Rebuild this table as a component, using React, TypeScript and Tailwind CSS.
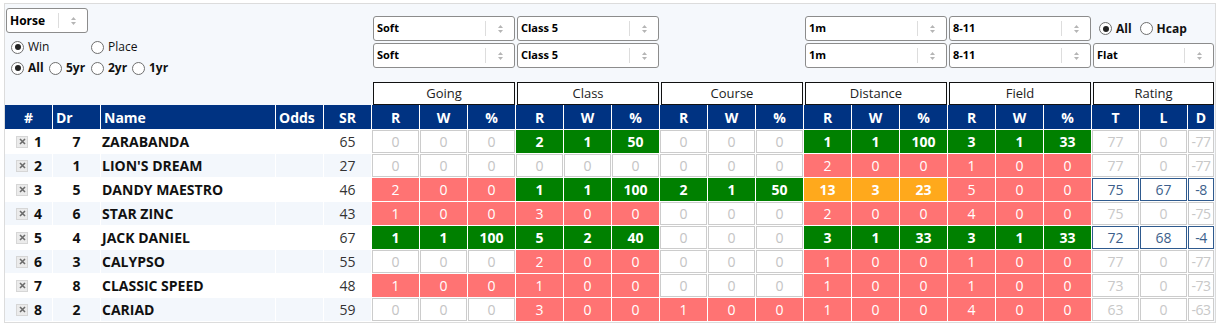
import type { ReactNode } from "react";

type Tone = "w" | "g" | "r" | "o";
type Stat = [number, number, number, Tone];

type Runner = {
  no: number;
  dr: number;
  name: string;
  sr: number;
  stats: Stat[];
  rating: [number, number, number, boolean];
};

const Z: Stat = [0, 0, 0, "w"];

const RUNNERS: Runner[] = [
  { no: 1, dr: 7, name: "ZARABANDA", sr: 65, stats: [Z, [2, 1, 50, "g"], Z, [1, 1, 100, "g"], [3, 1, 33, "g"]], rating: [77, 0, -77, false] },
  { no: 2, dr: 1, name: "LION'S DREAM", sr: 27, stats: [Z, Z, Z, [2, 0, 0, "r"], [1, 0, 0, "r"]], rating: [77, 0, -77, false] },
  { no: 3, dr: 5, name: "DANDY MAESTRO", sr: 46, stats: [[2, 0, 0, "r"], [1, 1, 100, "g"], [2, 1, 50, "g"], [13, 3, 23, "o"], [5, 0, 0, "r"]], rating: [75, 67, -8, true] },
  { no: 4, dr: 6, name: "STAR ZINC", sr: 43, stats: [[1, 0, 0, "r"], [3, 0, 0, "r"], Z, [2, 0, 0, "r"], [4, 0, 0, "r"]], rating: [75, 0, -75, false] },
  { no: 5, dr: 4, name: "JACK DANIEL", sr: 67, stats: [[1, 1, 100, "g"], [5, 2, 40, "g"], Z, [3, 1, 33, "g"], [3, 1, 33, "g"]], rating: [72, 68, -4, true] },
  { no: 6, dr: 3, name: "CALYPSO", sr: 55, stats: [Z, [2, 0, 0, "r"], Z, [1, 0, 0, "r"], [1, 0, 0, "r"]], rating: [77, 0, -77, false] },
  { no: 7, dr: 8, name: "CLASSIC SPEED", sr: 48, stats: [[1, 0, 0, "r"], [1, 0, 0, "r"], Z, [1, 0, 0, "r"], [1, 0, 0, "r"]], rating: [73, 0, -73, false] },
  { no: 8, dr: 2, name: "CARIAD", sr: 59, stats: [Z, [3, 0, 0, "r"], [1, 0, 0, "r"], [1, 0, 0, "r"], [4, 0, 0, "r"]], rating: [63, 0, -63, false] },
];

const GROUPS = ["Going", "Class", "Course", "Distance", "Field"];

const COLS =
  "grid grid-cols-[47px_47px_174px_47px_47px_repeat(15,47px)_47px_47px_26px] gap-x-px";

const TONE: Record<Tone, string> = {
  w: "bg-white border border-[#cccccc] text-[#c4c4c4]",
  g: "bg-[#008000] text-white font-bold",
  r: "bg-[#ff7373] text-white",
  o: "bg-[#ffa91c] text-white font-bold",
};

function Arrows() {
  return (
    <svg width="7" height="10" viewBox="0 0 7 10">
      <path d="M3.5 1 L6 4 L1 4 Z" fill="#b5b5b5" />
      <path d="M3.5 9 L6 6 L1 6 Z" fill="#b5b5b5" />
    </svg>
  );
}

function Select({ label, className = "" }: { label: string; className?: string }) {
  return (
    <div
      className={`flex items-center h-[25px] bg-white border border-[#8c8c8c] rounded-[3px] pl-[3px] ${className}`}
    >
      <span className="flex-1 text-[11px] font-bold text-black">{label}</span>
      <span className="w-px h-[15px] bg-[#dddddd]" />
      <span className="w-[28px] flex justify-center">
        <Arrows />
      </span>
    </div>
  );
}

function Radio({
  checked,
  children,
  className = "",
}: {
  checked?: boolean;
  children: ReactNode;
  className?: string;
}) {
  return (
    <label className={`flex items-center gap-[4px] ${className}`}>
      <span className="w-[13px] h-[13px] rounded-full border border-[#6f6f6f] bg-white flex items-center justify-center shrink-0">
        {checked && <span className="w-[6px] h-[6px] rounded-full bg-[#222]" />}
      </span>
      <span>{children}</span>
    </label>
  );
}

function RemoveBox() {
  return (
    <span className="w-[12px] h-[12px] bg-[#ebebeb] border border-[#d6d6d6] flex items-center justify-center">
      <svg width="7" height="7" viewBox="0 0 7 7">
        <path d="M1 1 L6 6 M6 1 L1 6" stroke="#6b6b6b" strokeWidth="1.6" />
      </svg>
    </span>
  );
}

export default function App() {
  return (
    <div className="bg-white min-h-screen pt-[3px] pl-[4px] font-['Open_Sans',sans-serif] text-[#111]">
      <div className="w-[1212px] border border-[#dcdcdc] bg-[#f5f8fc] pr-px">
        {/* filters */}
        <div className={`${COLS} h-[78px]`}>
          <div className="col-span-5">
            <Select label="Horse" className="ml-px mt-[4px] w-[82px] [&>span:first-child]:text-[12px]" />
            <div className="flex h-[16px] mt-[6px] pl-[6px] text-[12px]">
              <Radio checked className="w-[80px]">Win</Radio>
              <Radio>Place</Radio>
            </div>
            <div className="flex h-[16px] mt-[5px] pl-[6px] text-[12px] font-bold">
              <Radio checked className="w-[38px]">All</Radio>
              <Radio className="w-[42px]">5yr</Radio>
              <Radio className="w-[41px]">2yr</Radio>
              <Radio>1yr</Radio>
            </div>
          </div>
          <div className="col-span-3 pt-[12px] pl-px flex flex-col gap-[2px]">
            <Select label="Soft" />
            <Select label="Soft" />
          </div>
          <div className="col-span-3 pt-[12px] pl-px flex flex-col gap-[2px]">
            <Select label="Class 5" />
            <Select label="Class 5" />
          </div>
          <div className="col-span-3" />
          <div className="col-span-3 pt-[12px] pl-px flex flex-col gap-[2px]">
            <Select label="1m" />
            <Select label="1m" />
          </div>
          <div className="col-span-3 pt-[12px] pl-px flex flex-col gap-[2px]">
            <Select label="8-11" />
            <Select label="8-11" />
          </div>
          <div className="col-span-3 pt-[12px] pl-px flex flex-col gap-[2px]">
            <div className="h-[25px] flex items-center pl-[6px] text-[12px] font-bold gap-[8px]">
              <Radio checked>All</Radio>
              <Radio>Hcap</Radio>
            </div>
            <Select label="Flat" />
          </div>
        </div>

        {/* group headers */}
        <div className={`${COLS} h-[23px]`}>
          <div className="col-span-5" />
          {[...GROUPS, "Rating"].map((g) => (
            <div
              key={g}
              className="col-span-3 ml-px bg-white border border-[#111] flex items-center justify-center text-[13px] text-[#222]"
            >
              {g}
            </div>
          ))}
        </div>

        {/* table */}
        <div className="bg-white flex flex-col gap-y-px pb-px text-[14px]">
          <div className={`${COLS} h-[24px] text-white font-bold`}>
            <div className="bg-[#003382] flex items-center justify-center">#</div>
            <div className="bg-[#003382] flex items-center pl-[3px]">Dr</div>
            <div className="bg-[#003382] flex items-center pl-[3px]">Name</div>
            <div className="bg-[#003382] flex items-center pl-[3px]">Odds</div>
            <div className="bg-[#003382] flex items-center justify-center">SR</div>
            {GROUPS.flatMap((g) =>
              ["R", "W", "%"].map((h) => (
                <div key={g + h} className="bg-[#003382] flex items-center justify-center">
                  {h}
                </div>
              )),
            )}
            {["T", "L", "D"].map((h) => (
              <div key={h} className="bg-[#003382] flex items-center justify-center">
                {h}
              </div>
            ))}
          </div>

          {RUNNERS.map((r, i) => {
            const rowBg = i % 2 === 0 ? "bg-white" : "bg-[#f3f7fc]";
            const [t, l, d, active] = r.rating;
            const rate = active
              ? "bg-white border border-[#2f5a8e] text-[#3d5f8c]"
              : "bg-white border border-[#cccccc] text-[#c8c8c8]";
            return (
              <div key={r.no} className={`${COLS} h-[23px]`}>
                <div className={`${rowBg} flex items-center pl-[11px] gap-[6px] font-bold`}>
                  <RemoveBox />
                  {r.no}
                </div>
                <div className={`${rowBg} flex items-center justify-center font-bold`}>{r.dr}</div>
                <div className={`${rowBg} flex items-center pl-px font-bold`}>{r.name}</div>
                <div className={rowBg} />
                <div className={`${rowBg} flex items-center justify-center text-[#333]`}>{r.sr}</div>
                {r.stats.flatMap((s, si) =>
                  [s[0], s[1], s[2]].map((v, vi) => (
                    <div
                      key={`${si}-${vi}`}
                      className={`${TONE[s[3]]} flex items-center justify-center`}
                    >
                      {v}
                    </div>
                  )),
                )}
                <div className={`${rate} flex items-center justify-center`}>{t}</div>
                <div className={`${rate} flex items-center justify-center`}>{l}</div>
                <div className={`${rate} flex items-center justify-center tracking-[-0.5px]`}>{d}</div>
              </div>
            );
          })}
        </div>
      </div>
    </div>
  );
}
